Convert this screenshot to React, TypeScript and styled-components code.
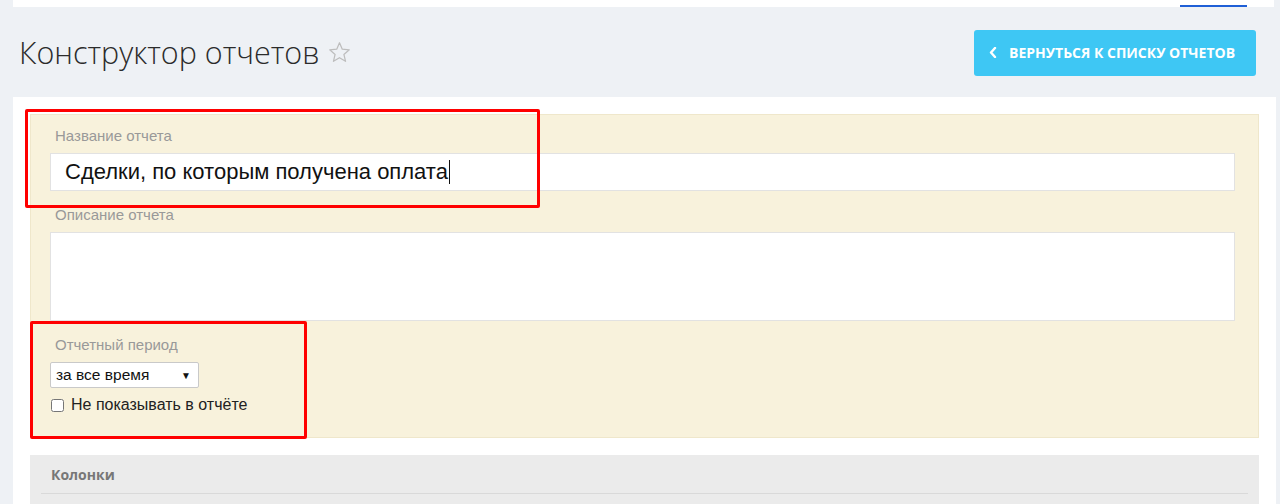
import React from "react";
import styled, { createGlobalStyle } from "styled-components";

const GlobalStyle = createGlobalStyle`
  html, body {
    margin: 0;
    padding: 0;
    background: #eef1f5;
    overflow: hidden;
  }
  * {
    box-sizing: border-box;
  }
`;

const Page = styled.div`
  height: 504px;
  padding: 0 4px 0 13px;
  font-family: "Liberation Sans", Arial, sans-serif;
  color: #333;
`;

const TopBar = styled.div`
  height: 7px;
  margin-right: 2px;
  background: #fff;
  display: flex;
  justify-content: flex-end;
  align-items: flex-end;
`;

const TabMarker = styled.div`
  width: 67px;
  height: 2px;
  margin-right: 27px;
  background: #1f5fd6;
`;

const Header = styled.div`
  height: 90px;
  display: flex;
  align-items: center;
  justify-content: space-between;
  padding: 0 20px 0 6px;
`;

const TitleRow = styled.div`
  display: flex;
  align-items: center;
  gap: 9px;
`;

const Title = styled.h1`
  margin: 0;
  font-family: "Open Sans", sans-serif;
  font-weight: 300;
  font-size: 30.5px;
  line-height: 40px;
  color: #2b2b2b;
`;

const BackButton = styled.button`
  height: 46px;
  width: 282px;
  margin-top: 1px;
  border: none;
  border-radius: 3px;
  background: #3ec7f4;
  color: #fff;
  display: flex;
  align-items: center;
  gap: 12px;
  padding: 0 0 0 15px;
  font-family: "Open Sans", sans-serif;
  font-weight: 700;
  font-size: 14px;
  text-transform: uppercase;
  cursor: pointer;
`;

const Card = styled.div`
  background: #fff;
  padding: 17px 17px 0 17px;
  height: 407px;
`;

const FormBox = styled.div`
  position: relative;
  background: #f8f2dc;
  border: 1px solid #efe7cb;
  padding: 11px 23px 22px 19px;
`;

const FieldLabel = styled.div`
  font-size: 15px;
  line-height: 20px;
  color: #999;
  padding-left: 5px;
  margin-bottom: 7px;
`;

const TextField = styled.div`
  height: 38px;
  background: #fff;
  border: 1px solid #e2e2e2;
  display: flex;
  align-items: center;
  padding-left: 14px;
  font-size: 22px;
  color: #111;
  margin-bottom: 14px;
`;

const Caret = styled.span`
  display: inline-block;
  width: 1px;
  height: 24px;
  background: #111;
  margin-left: 1px;
`;

const TextArea = styled.div`
  height: 89px;
  background: #fff;
  border: 1px solid #e2e2e2;
  margin-bottom: 14px;
`;

const SelectBox = styled.div`
  width: 149px;
  height: 26px;
  background: #fff;
  border: 1px solid #c9c9c9;
  border-radius: 2px;
  display: flex;
  align-items: center;
  justify-content: space-between;
  padding: 0 7px 0 5px;
  font-size: 15.5px;
  color: #111;
`;

const Arrow = styled.span`
  font-size: 10px;
`;

const CheckRow = styled.label`
  display: flex;
  align-items: center;
  gap: 7px;
  margin-top: 7px;
  padding-left: 1px;
  font-size: 16px;
  line-height: 20px;
  color: #222;

  input {
    margin: 0;
    width: 13px;
    height: 13px;
  }
`;

const Highlight = styled.div<{ $top: number; $left: number; $w: number; $h: number }>`
  position: absolute;
  top: ${(p) => p.$top}px;
  left: ${(p) => p.$left}px;
  width: ${(p) => p.$w}px;
  height: ${(p) => p.$h}px;
  border: 3px solid #ff0000;
  border-radius: 2px;
  pointer-events: none;
`;

const Section = styled.div`
  margin-top: 17px;
  background: #ebebeb;
  padding: 0 11px;
  height: 60px;
`;

const SectionHeader = styled.div`
  height: 39px;
  border-bottom: 1px solid #d9d9d9;
  display: flex;
  align-items: center;
  padding: 0 10px;
  font-family: "Open Sans", sans-serif;
  font-weight: 700;
  font-size: 14px;
  color: #777;
`;

const StarIcon = () => (
  <svg width="23" height="23" viewBox="0 0 24 24" fill="none">
    <polygon
      points="12,1.8 14.9,8.6 22.2,9.2 16.6,14 18.3,21.2 12,17.4 5.7,21.2 7.4,14 1.8,9.2 9.1,8.6"
      stroke="#bdbdbd"
      strokeWidth="1.3"
      strokeLinejoin="round"
    />
  </svg>
);

const ChevronIcon = () => (
  <svg width="8" height="11" viewBox="0 0 8 11" fill="none">
    <polyline points="6,1 2,5.5 6,10" stroke="#fff" strokeWidth="2.4" strokeLinecap="round" strokeLinejoin="round" />
  </svg>
);

export default function App() {
  return (
    <>
      <GlobalStyle />
      <Page>
        <TopBar>
          <TabMarker />
        </TopBar>
        <Header>
          <TitleRow>
            <Title>Конструктор отчетов</Title>
            <StarIcon />
          </TitleRow>
          <BackButton>
            <ChevronIcon />
            Вернуться к списку отчетов
          </BackButton>
        </Header>
        <Card>
          <FormBox>
            <FieldLabel>Название отчета</FieldLabel>
            <TextField>
              Сделки, по которым получена оплата
              <Caret />
            </TextField>
            <FieldLabel>Описание отчета</FieldLabel>
            <TextArea />
            <FieldLabel>Отчетный период</FieldLabel>
            <SelectBox>
              <span>за все время</span>
              <Arrow>▼</Arrow>
            </SelectBox>
            <CheckRow>
              <input type="checkbox" />
              Не показывать в отчёте
            </CheckRow>
            <Highlight $top={-6} $left={-6} $w={515} $h={99} />
            <Highlight $top={206} $left={-1} $w={277} $h={118} />
          </FormBox>
          <Section>
            <SectionHeader>Колонки</SectionHeader>
          </Section>
        </Card>
      </Page>
    </>
  );
}
